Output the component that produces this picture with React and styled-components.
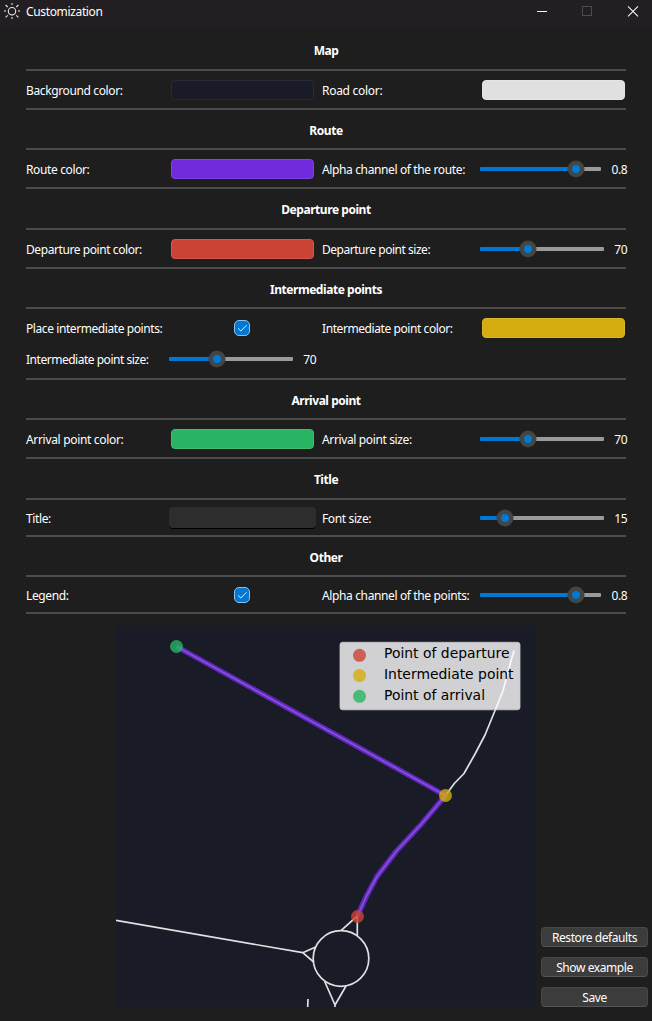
import React from "react";
import styled, { createGlobalStyle } from "styled-components";

const GlobalStyle = createGlobalStyle`
  * { box-sizing: border-box; }
  body {
    margin: 0;
    background: #1e1e1e;
    color: #fff;
    font: 12px/17px "Noto Sans", "Open Sans", sans-serif;
  }
`;

const Window = styled.div`
  width: 652px;
  height: 1021px;
  overflow: hidden;
  display: flex;
  flex-direction: column;
  background: #1e1e1e;
`;

const TitleBar = styled.header`
  flex: none;
  height: 27px;
  display: flex;
  align-items: flex-start;
  background: #231e21;
`;

const AppIcon = styled.svg`
  flex: none;
  width: 26px;
  height: 24px;
`;

const WindowTitle = styled.div`
  flex: 1;
  padding-top: 3px;
  letter-spacing: -0.35px;
`;

const WindowControls = styled.svg`
  flex: none;
  width: 136px;
  height: 24px;
`;

const Form = styled.main`
  flex: none;
  width: 601px;
  margin-left: 26px;
`;

const SectionTitle = styled.h2`
  margin: 0;
  width: 600px;
  height: ${(p) => p.$height + 2}px;
  padding-top: ${(p) => (p.$height > 40 ? 15 : 12)}px;
  border-bottom: 2px solid #4b4b4b;
  font-size: 12px;
  line-height: 17px;
  font-weight: 700;
  text-align: center;
  letter-spacing: -0.45px;
`;

const SectionBody = styled.div`
  width: 600px;
  height: ${(p) => p.$height + 2}px;
  padding-top: ${(p) => (p.$height === 35 ? 7 : 8)}px;
  border-bottom: 2px solid #4b4b4b;
  display: flex;
  flex-direction: column;
  gap: 9px;
`;

const Row = styled.div`
  flex: none;
  width: 601px;
  height: 22px;
  display: grid;
  grid-template-columns: 143px 147px 164px 147px;
  align-items: center;
`;

const Label = styled.label`
  white-space: nowrap;
  padding-top: 1px;
  padding-left: ${(p) => (p.$second ? 6 : 0)}px;
  letter-spacing: ${(p) => p.$spacing || -0.37}px;
`;

const Swatch = styled.button`
  display: block;
  width: 143px;
  height: 20px;
  margin: 0 2px;
  padding: 0;
  border: 1px solid ${(p) => p.$edge};
  border-radius: 4px;
  background: ${(p) => p.$color};
`;

const TextInput = styled.input`
  width: 147px;
  height: 22px;
  border: 0;
  border-bottom: 1px solid #000;
  border-radius: 4px;
  background: #2d2d2d;
  color: #fff;
  outline: 0;
`;

const CheckBox = styled.span`
  justify-self: center;
  width: 16px;
  height: 16px;
  margin-right: 1px;
  border: 1px solid #8dbfe8;
  border-radius: 5px;
  background: #0078d4;
  display: flex;

  svg { width: 14px; height: 14px; }
`;

const SliderBox = styled.div`
  display: flex;
  align-items: center;
  justify-content: space-between;
  height: 20px;
`;

const Track = styled.div`
  position: relative;
  width: ${(p) => p.$width}px;
  height: 4px;
  border-radius: 1px;
  background: linear-gradient(to right, #0078d4 ${(p) => p.$at}px, #9a9a9a ${(p) => p.$at}px);
`;

const Thumb = styled.span`
  position: absolute;
  top: -6px;
  left: ${(p) => p.$at - 8}px;
  width: 16px;
  height: 16px;
  border: 4px solid #454545;
  border-radius: 50%;
  background: #0078d4;
  box-shadow: 0 0 0 0.5px #3c3c3c;
`;

const Value = styled.span`
  padding-top: 1px;
  letter-spacing: -0.5px;
`;

const Footer = styled.section`
  flex: none;
  display: flex;
  align-items: flex-end;
  gap: 5px;
  margin: 11px 0 0 116px;
`;

const Preview = styled.svg`
  display: block;
  width: 420px;
  height: 382px;
`;

const Actions = styled.div`
  display: flex;
  flex-direction: column;
  gap: 10px;
`;

const ActionButton = styled.button`
  width: 107px;
  height: 20px;
  padding: 1px 0 0;
  border: 1px solid #484848;
  border-bottom-color: #555;
  border-radius: 4px;
  background: #3c3c3c;
  color: #fff;
  font: inherit;
  line-height: 17px;
  letter-spacing: -0.42px;
`;

function Slider({ width = 124, at, value }) {
  return (
    <SliderBox>
      <Track $width={width} $at={at}>
        <Thumb $at={at} />
      </Track>
      <Value>{value}</Value>
    </SliderBox>
  );
}

function Check() {
  return (
    <CheckBox role="checkbox" aria-checked="true">
      <svg viewBox="0 0 14 14" fill="none" stroke="#e6f2fc" strokeWidth="1">
        <path d="M3 7.3 L5.8 10 L11.5 4.3" />
      </svg>
    </CheckBox>
  );
}

function Section({ title, head = 38, body = 37, children }) {
  return (
    <section>
      <SectionTitle $height={head}>{title}</SectionTitle>
      <SectionBody $height={body}>{children}</SectionBody>
    </section>
  );
}

const LEGEND = [
  { text: "Point of departure", y: 658, dot: 655.3, color: "#cb4335", length: 125.5 },
  { text: "Intermediate point", y: 679, dot: 675.6, color: "#d4ac0d", length: 129.5 },
  { text: "Point of arrival", y: 700, dot: 696.3, color: "#28b463", length: 101 },
];

function RoutePreview() {
  return (
    <Preview viewBox="116 625 420 382">
      <rect x="116" y="625" width="420" height="382" fill="#191b26" />
      <g fill="none" stroke="#e0e0e0" strokeWidth="1.7" strokeLinejoin="round">
        <path d="M514.2 650.5 L511.5 659 L502.7 691.7 L485 735 L475 754 L464 773.5 L454.3 783.5 L445.5 795.5 L421 824.5 L396.5 851 L377 876.5 L367 895 L357.3 916" />
        <path d="M176.5 646.5 L445.5 795.5" />
        <path d="M357.3 936 V916 L341 930.7" />
        <path d="M116 920.3 L302.7 952.7 L315.7 947 M302.7 952.7 L313.7 962" />
        <path d="M324.7 981.5 L335 1005 L346 986 M335 1004 V1007" />
        <path d="M308 999 L307.7 1007" />
        <circle cx="341" cy="958.5" r="27.8" />
      </g>
      <path
        d="M176.5 646.5 L445.5 795.5 L421 824.5 L396.5 851 L377 876.5 L367 895 L357.3 916"
        fill="none" stroke="#6f2bdc" strokeOpacity="0.8" strokeWidth="5.4" strokeLinejoin="round"
      />
      <g fillOpacity="0.8">
        <circle cx="176.5" cy="646.5" r="6.5" fill="#28b463" />
        <circle cx="445.5" cy="795.5" r="6.5" fill="#d4ac0d" />
        <circle cx="357.5" cy="916.5" r="6.5" fill="#cb4335" />
      </g>
      <rect x="340" y="642.3" width="180" height="67.5" rx="2.5" fill="#fff" fillOpacity="0.8" stroke="#ccc" strokeOpacity="0.8" />
      {LEGEND.map((item) => (
        <g key={item.text}>
          <circle cx="359.5" cy={item.dot} r="6.5" fill={item.color} fillOpacity="0.8" />
          <text x="384" y={item.y} textLength={item.length} fontFamily="DejaVu Sans, sans-serif" fontSize="13.9" fill="#000">
            {item.text}
          </text>
        </g>
      ))}
    </Preview>
  );
}

export default function App() {
  return (
    <Window>
      <GlobalStyle />
      <TitleBar>
        <AppIcon viewBox="0 0 26 24" fill="none" stroke="#e8e8e8" strokeWidth="1.1">
          <circle cx="12" cy="11.2" r="3.7" />
          <path d="M5.6 5 L7.7 7 M18.4 5 L16.3 7 M5.6 17.4 L7.7 15.4 M18.4 17.4 L16.3 15.4" />
          <path stroke="#8b888a" strokeWidth="2" d="M12 3 V5 M12 17 V19 M4 11 H6 M18 11 H20" />
        </AppIcon>
        <WindowTitle>Customization</WindowTitle>
        <WindowControls viewBox="516 0 136 24" fill="none">
          <path d="M537 11.5 H547" stroke="#fff" />
          <rect x="582.5" y="6.5" width="9" height="9" stroke="#4f4b4d" />
          <path d="M628 6.3 L638 16.3 M638 6.3 L628 16.3" stroke="#f2f2f2" strokeWidth="1.1" />
        </WindowControls>
      </TitleBar>

      <Form>
        <Section title="Map" head={42}>
          <Row>
            <Label>Background color:</Label>
            <Swatch $color="#191b26" $edge="#28293a" />
            <Label $second $spacing={-0.28}>Road color:</Label>
            <Swatch $color="#e0e0e0" $edge="#e4e4e4" />
          </Row>
        </Section>
        <Section title="Route">
          <Row>
            <Label>Route color:</Label>
            <Swatch $color="#6f2bdc" $edge="#7f43e0" />
            <Label $second>Alpha channel of the route:</Label>
            <Slider width={121} at={96} value="0.8" />
          </Row>
        </Section>
        <Section title="Departure point" head={39}>
          <Row>
            <Label $spacing={-0.42}>Departure point color:</Label>
            <Swatch $color="#cb4335" $edge="#d2584c" />
            <Label $second $spacing={-0.47}>Departure point size:</Label>
            <Slider at={48} value="70" />
          </Row>
        </Section>
        <Section title="Intermediate points" body={69}>
          <Row>
            <Label $spacing={-0.42}>Place intermediate points:</Label>
            <Check />
            <Label $second $spacing={-0.42}>Intermediate point color:</Label>
            <Swatch $color="#d4ac0d" $edge="#dab528" />
          </Row>
          <Row>
            <Label $spacing={-0.48}>Intermediate point size:</Label>
            <Slider at={48} value="70" />
          </Row>
        </Section>
        <Section title="Arrival point">
          <Row>
            <Label $spacing={-0.32}>Arrival point color:</Label>
            <Swatch $color="#28b463" $edge="#40bc74" />
            <Label $second>Arrival point size:</Label>
            <Slider at={48} value="70" />
          </Row>
        </Section>
        <Section title="Title" head={39} body={35}>
          <Row>
            <Label>Title:</Label>
            <TextInput />
            <Label $second>Font size:</Label>
            <Slider at={25} value="15" />
          </Row>
        </Section>
        <Section title="Other" body={35}>
          <Row>
            <Label>Legend:</Label>
            <Check />
            <Label $second>Alpha channel of the points:</Label>
            <Slider width={121} at={96} value="0.8" />
          </Row>
        </Section>
      </Form>

      <Footer>
        <RoutePreview />
        <Actions>
          <ActionButton>Restore defaults</ActionButton>
          <ActionButton>Show example</ActionButton>
          <ActionButton>Save</ActionButton>
        </Actions>
      </Footer>
    </Window>
  );
}
